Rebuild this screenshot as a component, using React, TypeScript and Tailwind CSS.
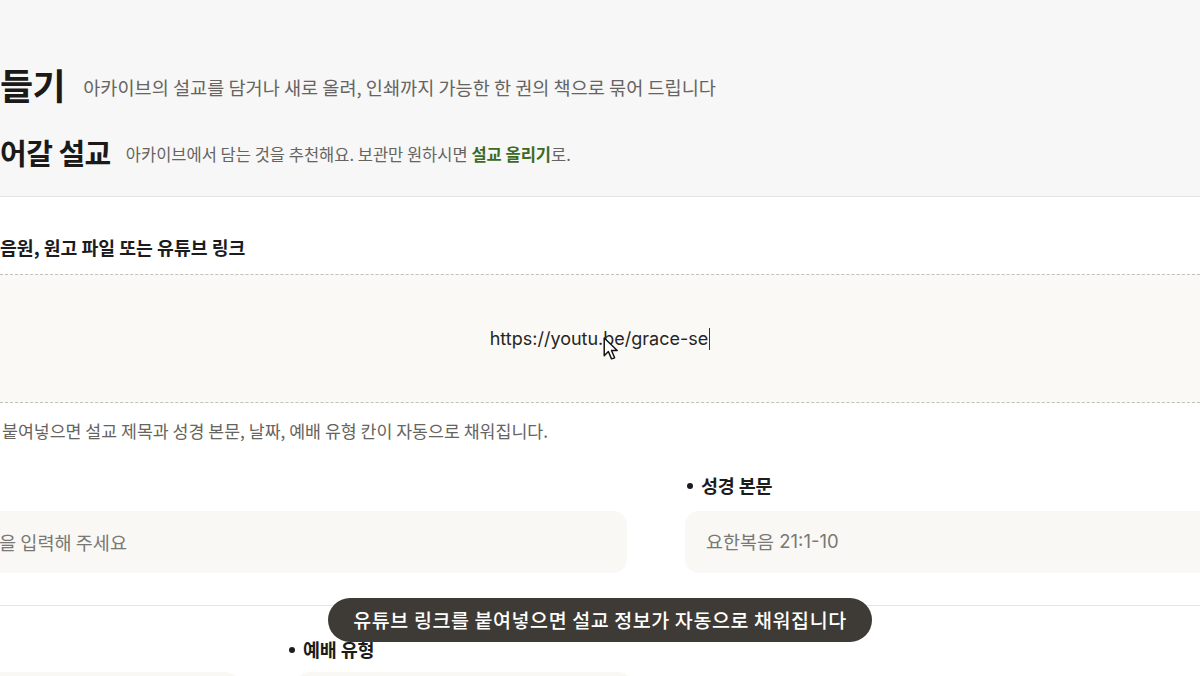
import React from "react";

const KR = { fontFamily: '"Noto Sans CJK KR", "Noto Sans", sans-serif' };
const LAT = { fontFamily: 'Inter, "Noto Sans CJK KR", sans-serif' };

function Label({ text }: { text: string }) {
  return (
    <div className="flex h-[24px] items-center gap-[8px] pl-[2px]">
      <span className="h-[6px] w-[6px] rounded-full bg-[#1c1c1c]" />
      <span className="text-[18.5px] font-bold tracking-[-0.2px] text-[#1c1c1c]">{text}</span>
    </div>
  );
}

export default function App() {
  return (
    <div className="relative h-[676px] w-[1200px] overflow-hidden bg-white" style={KR}>
      {/* Header */}
      <div className="h-[197px] border-b border-[#e3e3e1] bg-[#f7f7f7] pt-[56px]">
        <div className="flex h-[56px] items-center gap-[18px]">
          <span className="text-[36px] font-bold leading-none tracking-[-0.5px] text-[#1b1a18]">들기</span>
          <span className="pt-[6px] text-[18.6px] text-[#666460]">
            아카이브의 설교를 담거나 새로 올려, 인쇄까지 가능한 한 권의 책으로 묶어 드립니다
          </span>
        </div>
        <div className="mt-[20px] flex h-[40px] items-center gap-[15px]">
          <span className="text-[29px] font-bold leading-none tracking-[-0.5px] text-[#1b1a18]">어갈 설교</span>
          <span className="pt-[5px] text-[16.5px] text-[#666460]">
            아카이브에서 담는 것을 추천해요. 보관만 원하시면{" "}
            <span className="font-bold text-[#3d6a22]">설교 올리기</span>로.
          </span>
        </div>
      </div>

      {/* Body */}
      <div className="-ml-[30px] w-[1290px]">
        <div className="mt-[39px] flex h-[24px] items-center pl-[30px] text-[18.3px] font-bold text-[#1c1c1c]">
          음원, 원고 파일 또는 유튜브 링크
        </div>
        <div className="relative mt-[14px] flex h-[129px] items-center justify-center border-y-[1.5px] border-dashed border-[#c2c0bc] bg-[#faf9f6] pl-[30px] pr-[60px]">
          <div className="flex items-center text-[18px] text-[#262523]" style={LAT}>
            <span>https://youtu.be/grace-se</span>
            <span className="ml-[1px] h-[22px] w-[1px] bg-[#333]" />
          </div>
        </div>
        <div className="mt-[17px] flex h-[22px] items-center pl-[32px] text-[17.3px] text-[#666460]">
          붙여넣으면 설교 제목과 성경 본문, 날짜, 예배 유형 칸이 자동으로 채워집니다.
        </div>

        <div className="mt-[32px] flex gap-[58px]">
          <div className="w-[657px]">
            <div className="h-[24px]" />
            <div className="mt-[13px] flex h-[62px] items-center rounded-[14px] bg-[#f9f8f5] pl-[29px] text-[18.6px] text-[#7a7875]">
              을 입력해 주세요
            </div>
          </div>
          <div className="flex-1">
            <Label text="성경 본문" />
            <div className="mt-[13px] flex h-[62px] items-center rounded-[14px] bg-[#f9f8f5] pl-[21px] text-[18.5px] text-[#7a7875]" style={LAT}>
              <span style={KR}>요한복음</span>&nbsp;21:1-10
            </div>
          </div>
        </div>

        <div className="mt-[32px] h-px bg-[#e6e5e2]" />

        <div className="mt-[32px] flex">
          <div className="w-[268px]">
            <div className="h-[24px]" />
            <div className="mt-[10px] h-[40px] rounded-[12px] bg-[#f9f8f5]" />
          </div>
          <div className="ml-[49px] w-[344px]">
            <Label text="예배 유형" />
            <div className="mt-[10px] ml-[10px] h-[40px] rounded-[12px] bg-[#f9f8f5]" />
          </div>
        </div>
      </div>

      {/* Mouse cursor */}
      <svg className="absolute left-[603px] top-[337px]" width="17" height="25" viewBox="0 0 16 24">
        <path d="M1 1 L1 18 L5 14 L8 21 L11 20 L8 13 L13.5 13 Z" fill="#fff" stroke="#111" strokeWidth="1.4" strokeLinejoin="round" />
      </svg>

      {/* Toast */}
      <div className="absolute left-[328px] top-[598px] flex h-[44px] w-[544px] items-center justify-center rounded-full bg-[#3e3b37] text-[19.5px] font-medium tracking-[0.6px] text-white">
        유튜브 링크를 붙여넣으면 설교 정보가 자동으로 채워집니다
      </div>
    </div>
  );
}
